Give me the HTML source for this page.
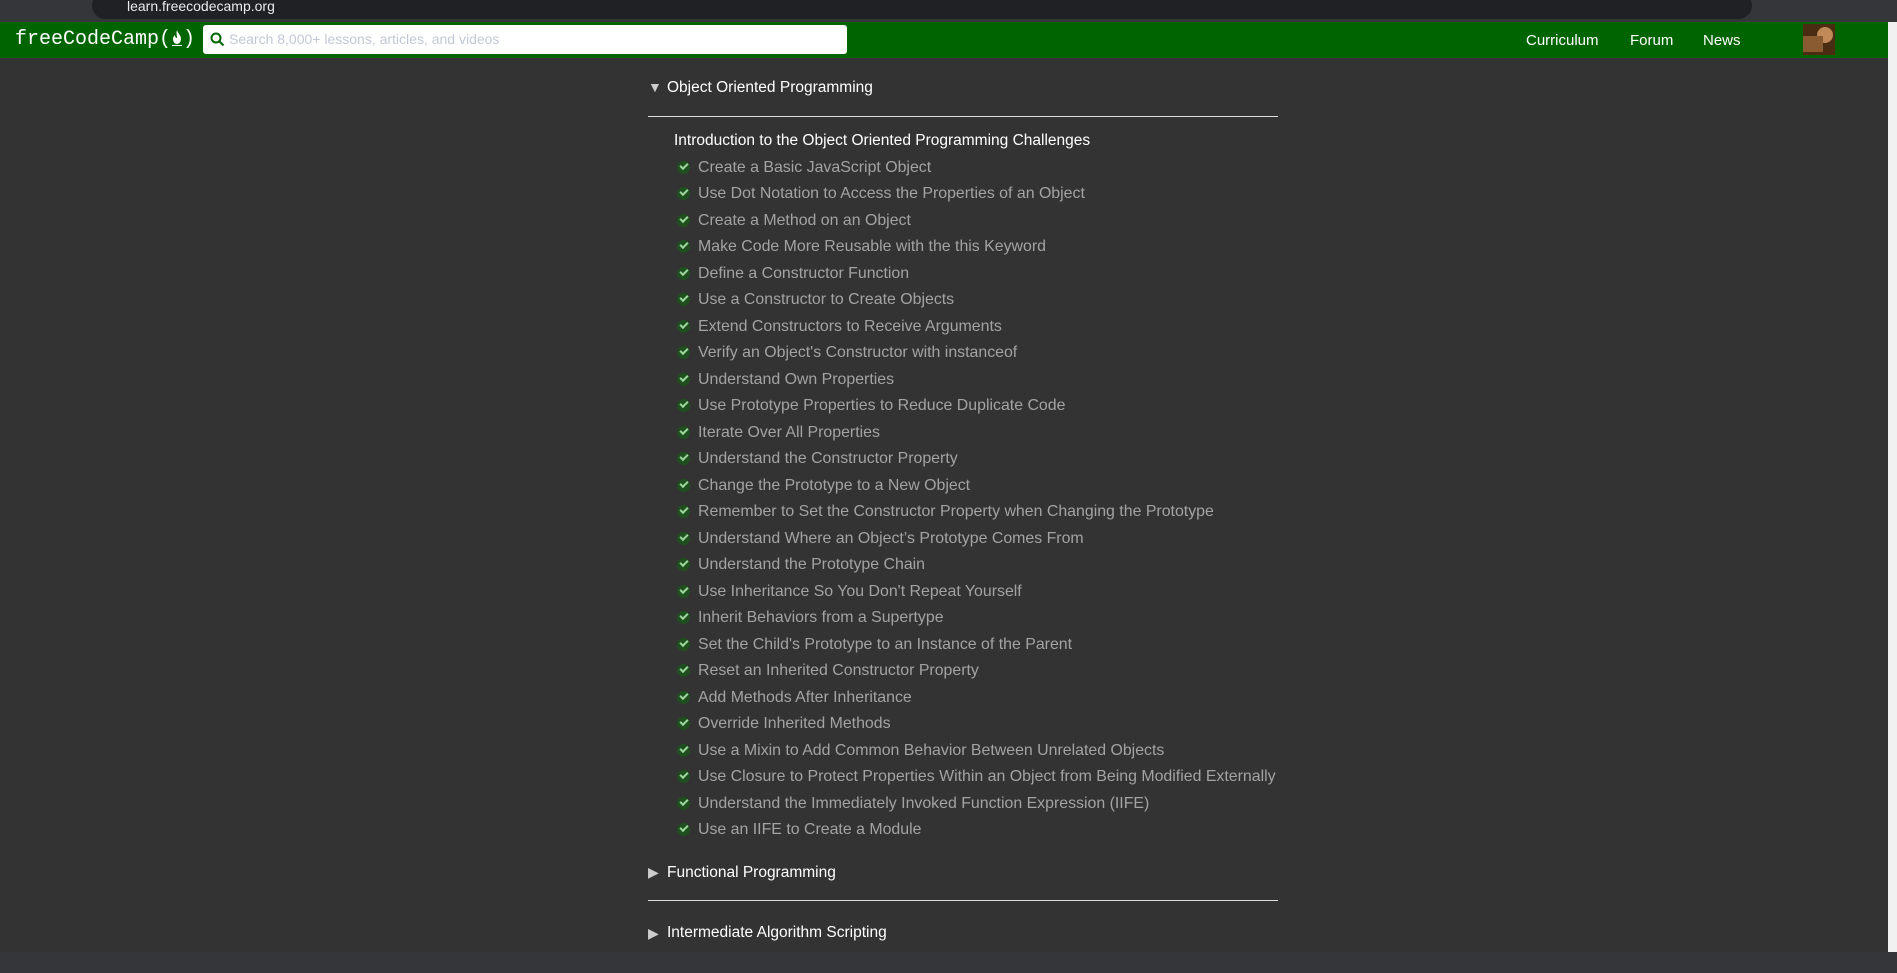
<!DOCTYPE html>
<html><head><meta charset="utf-8"><style>
*{margin:0;padding:0;box-sizing:border-box}
html,body{width:1897px;height:973px;overflow:hidden;background:#333;font-family:"Liberation Sans",sans-serif}
.chrome{position:absolute;left:0;top:0;width:1897px;height:22px;background:#35363a}
.url{position:absolute;left:92px;top:-8px;width:1660px;height:27px;background:#202124;border-radius:14px}
.urltxt{position:absolute;left:127px;top:0;color:#e8eaed;font-size:14px;line-height:12px}
.nav{position:absolute;left:0;top:22px;width:1888px;height:36px;background:#006400}
.logo{position:absolute;left:15px;top:5px;color:#fff;font-family:"Liberation Mono",monospace;font-size:20px;line-height:26px;white-space:nowrap}
.search{position:absolute;left:203px;top:3px;width:644px;height:29px;background:#fff;border-radius:3px}
.search span{position:absolute;left:26px;top:6px;color:#c3c8d4;font-size:14px}
.nav a{position:absolute;top:10px;color:#fff;font-size:15px;text-decoration:none}
.avatar{position:absolute;left:1803px;top:2px;width:32px;height:31px;background:#4a2c12}
.sb{position:absolute;left:1888px;top:22px;width:9px;height:930px;background:#f1f1f1}
.bottom{position:absolute;left:0;top:952px;width:1897px;height:21px;background:#35363a}
.h{position:absolute;color:#fff;font-size:15.5px}
.tri{position:absolute;left:648px;color:#ccc;font-size:14px}
.line{position:absolute;left:648px;width:630px;height:1px;background:#ddd}
.it{position:absolute;left:677px;font-size:15.9px;color:#a3a3a3;white-space:nowrap}
.it i{position:absolute;left:0;top:2px;width:13px;height:13px;border-radius:50%;background:#1f4f1f}
.it i:after{content:"";position:absolute;left:3px;top:2px;width:6px;height:3px;border-left:2px solid #9bd59b;border-bottom:2px solid #9bd59b;transform:rotate(-45deg)}
.it span{position:absolute;left:21px;top:0}
</style></head><body>
<div class="chrome"><div class="url"></div><div class="urltxt">learn.freecodecamp.org</div></div>
<div class="nav">
<div class="logo">freeCodeCamp(<svg width="12" height="18" viewBox="0 0 12 18" style="vertical-align:-2px"><path d="M6 2C7 6 10 7 10 11C10 14 8 16 6 16C4 16 2 14 2 11C2 9 3 8 4 7C4 9 5 10 6 10C6 7 5 5 6 2Z" fill="#fff"/><rect x="1" y="17" width="10" height="1.5" fill="#fff"/></svg>)</div>
<div class="search"><svg style="position:absolute;left:7px;top:7px" width="15" height="15" viewBox="0 0 15 15"><circle cx="6" cy="6" r="4.5" fill="none" stroke="#006400" stroke-width="2"/><path d="M9.5 9.5L13.5 13.5" stroke="#006400" stroke-width="2"/></svg><span>Search 8,000+ lessons, articles, and videos</span></div>
<a style="left:1526px">Curriculum</a><a style="left:1630px">Forum</a><a style="left:1703px">News</a>
<div class="avatar"><div style="position:absolute;left:14px;top:3px;width:16px;height:16px;border-radius:50%;background:#c08a58"></div><div style="position:absolute;left:0;top:12px;width:20px;height:16px;background:#8a5a30"></div></div>
</div>
<div class="sb"></div>
<div class="tri" style="top:79px">▼</div><div class="h" style="left:667px;top:79px">Object Oriented Programming</div>
<div class="line" style="top:116px"></div>
<div class="h" style="left:674px;top:132px">Introduction to the Object Oriented Programming Challenges</div>
<div class="tri" style="top:864px">▶</div><div class="h" style="left:667px;top:864px">Functional Programming</div>
<div class="line" style="top:900px"></div>
<div class="tri" style="top:925px">▶</div><div class="h" style="left:667px;top:924px">Intermediate Algorithm Scripting</div>
<div class="bottom"></div>
<div class="it" style="top:159px"><i></i><span>Create a Basic JavaScript Object</span></div>
<div class="it" style="top:185px"><i></i><span>Use Dot Notation to Access the Properties of an Object</span></div>
<div class="it" style="top:212px"><i></i><span>Create a Method on an Object</span></div>
<div class="it" style="top:238px"><i></i><span>Make Code More Reusable with the this Keyword</span></div>
<div class="it" style="top:265px"><i></i><span>Define a Constructor Function</span></div>
<div class="it" style="top:291px"><i></i><span>Use a Constructor to Create Objects</span></div>
<div class="it" style="top:318px"><i></i><span>Extend Constructors to Receive Arguments</span></div>
<div class="it" style="top:344px"><i></i><span>Verify an Object's Constructor with instanceof</span></div>
<div class="it" style="top:371px"><i></i><span>Understand Own Properties</span></div>
<div class="it" style="top:397px"><i></i><span>Use Prototype Properties to Reduce Duplicate Code</span></div>
<div class="it" style="top:424px"><i></i><span>Iterate Over All Properties</span></div>
<div class="it" style="top:450px"><i></i><span>Understand the Constructor Property</span></div>
<div class="it" style="top:477px"><i></i><span>Change the Prototype to a New Object</span></div>
<div class="it" style="top:503px"><i></i><span>Remember to Set the Constructor Property when Changing the Prototype</span></div>
<div class="it" style="top:530px"><i></i><span>Understand Where an Object’s Prototype Comes From</span></div>
<div class="it" style="top:556px"><i></i><span>Understand the Prototype Chain</span></div>
<div class="it" style="top:583px"><i></i><span>Use Inheritance So You Don't Repeat Yourself</span></div>
<div class="it" style="top:609px"><i></i><span>Inherit Behaviors from a Supertype</span></div>
<div class="it" style="top:636px"><i></i><span>Set the Child's Prototype to an Instance of the Parent</span></div>
<div class="it" style="top:662px"><i></i><span>Reset an Inherited Constructor Property</span></div>
<div class="it" style="top:689px"><i></i><span>Add Methods After Inheritance</span></div>
<div class="it" style="top:715px"><i></i><span>Override Inherited Methods</span></div>
<div class="it" style="top:742px"><i></i><span>Use a Mixin to Add Common Behavior Between Unrelated Objects</span></div>
<div class="it" style="top:768px"><i></i><span>Use Closure to Protect Properties Within an Object from Being Modified Externally</span></div>
<div class="it" style="top:795px"><i></i><span>Understand the Immediately Invoked Function Expression (IIFE)</span></div>
<div class="it" style="top:821px"><i></i><span>Use an IIFE to Create a Module</span></div>
</body></html>
